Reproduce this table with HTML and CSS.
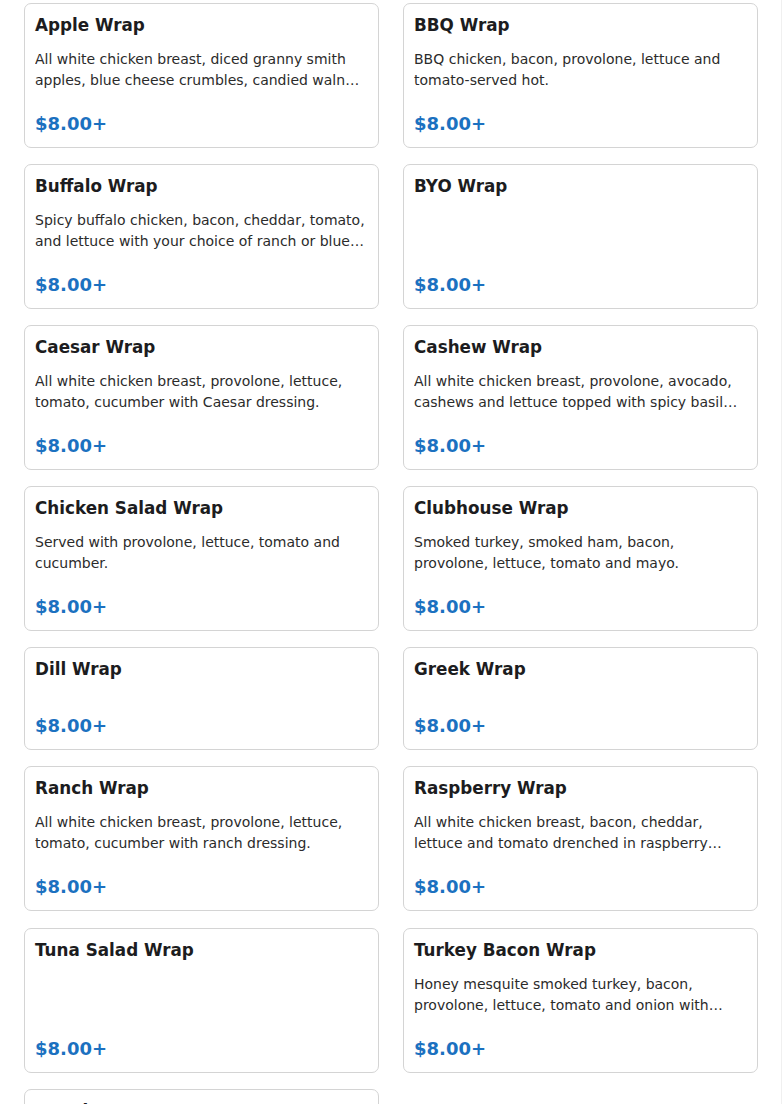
FILE: index.html
```html
<!DOCTYPE html>
<html lang="en">
<head>
<meta charset="utf-8">
<title>Wraps</title>
<link rel="stylesheet" href="styles.css">
</head>
<body>
<div class="page">
  <div class="grid">
    <div class="card"><h3 class="title">Apple Wrap</h3><p class="desc">All white chicken breast, diced granny smith apples, blue cheese crumbles, candied walnuts and lettuce with raspberry vinaigrette.</p><div class="price">$8.00+</div></div>
    <div class="card"><h3 class="title">BBQ Wrap</h3><p class="desc">BBQ chicken, bacon, provolone, lettuce and tomato-served hot.</p><div class="price">$8.00+</div></div>
    <div class="card"><h3 class="title">Buffalo Wrap</h3><p class="desc">Spicy buffalo chicken, bacon, cheddar, tomato, and lettuce with your choice of ranch or blue cheese dressing.</p><div class="price">$8.00+</div></div>
    <div class="card"><h3 class="title">BYO Wrap</h3><p class="desc"></p><div class="price">$8.00+</div></div>
    <div class="card"><h3 class="title">Caesar Wrap</h3><p class="desc">All white chicken breast, provolone, lettuce, tomato, cucumber with Caesar dressing.</p><div class="price">$8.00+</div></div>
    <div class="card"><h3 class="title">Cashew Wrap</h3><p class="desc">All white chicken breast, provolone, avocado, cashews and lettuce topped with spicy basil mayo.</p><div class="price">$8.00+</div></div>
    <div class="card"><h3 class="title">Chicken Salad Wrap</h3><p class="desc">Served with provolone, lettuce, tomato and cucumber.</p><div class="price">$8.00+</div></div>
    <div class="card"><h3 class="title">Clubhouse Wrap</h3><p class="desc">Smoked turkey, smoked ham, bacon, provolone, lettuce, tomato and mayo.</p><div class="price">$8.00+</div></div>
    <div class="card"><h3 class="title">Dill Wrap</h3><p class="desc"></p><div class="price">$8.00+</div></div>
    <div class="card"><h3 class="title">Greek Wrap</h3><p class="desc"></p><div class="price">$8.00+</div></div>
    <div class="card"><h3 class="title">Ranch Wrap</h3><p class="desc">All white chicken breast, provolone, lettuce, tomato, cucumber with ranch dressing.</p><div class="price">$8.00+</div></div>
    <div class="card"><h3 class="title">Raspberry Wrap</h3><p class="desc">All white chicken breast, bacon, cheddar, lettuce and tomato drenched in raspberry vinaigrette.</p><div class="price">$8.00+</div></div>
    <div class="card"><h3 class="title">Tuna Salad Wrap</h3><p class="desc"></p><div class="price">$8.00+</div></div>
    <div class="card"><h3 class="title">Turkey Bacon Wrap</h3><p class="desc">Honey mesquite smoked turkey, bacon, provolone, lettuce, tomato and onion with ranch dressing.</p><div class="price">$8.00+</div></div>
    <div class="card"><h3 class="title">Veggie Wrap</h3><p class="desc">Provolone, avocado, lettuce, tomato, cucumber and onion.</p><div class="price">$8.00+</div></div>
  </div>
</div>
</body>
</html>
```

FILE: styles.css
```css
html, body {
  margin: 0;
  padding: 0;
  background: #ffffff;
}
body {
  font-family: "DejaVu Sans", sans-serif;
  color: #1f1f1f;
}
.page {
  padding: 3px 23px 24px 24px;
  border-right: 1px solid #f0f0f0;
  min-height: 1104px;
  box-sizing: border-box;
}
.grid {
  display: grid;
  grid-template-columns: 1fr 1fr;
  column-gap: 24px;
  row-gap: 16.1px;
}
.card {
  border: 1px solid #d4d4d4;
  border-radius: 7px;
  padding: 10px;
  display: flex;
  flex-direction: column;
  background: #fff;
}
.title {
  margin: 0 0 13px;
  font-size: 16.8px;
  line-height: 22px;
  font-weight: bold;
  color: #1c1c20;
}
.desc {
  margin: 0 0 20px;
  font-size: 14px;
  line-height: 21px;
  color: #2b2b2b;
  display: -webkit-box;
  -webkit-line-clamp: 2;
  -webkit-box-orient: vertical;
  overflow: hidden;
}
.price {
  margin-top: auto;
  font-size: 18px;
  line-height: 26px;
  font-weight: bold;
  color: #1b71c0;
}
```
